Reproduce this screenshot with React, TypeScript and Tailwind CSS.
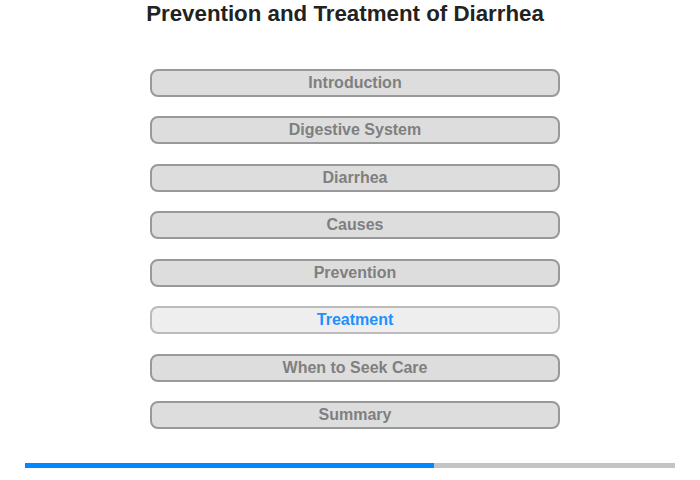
import React from 'react';

const items = [
  'Introduction',
  'Digestive System',
  'Diarrhea',
  'Causes',
  'Prevention',
  'Treatment',
  'When to Seek Care',
  'Summary',
];

const App = () => {
  const active = 'Treatment';
  return (
    <div className="w-[700px] h-[480px] bg-white font-['Liberation_Sans',Arial,sans-serif] flex flex-col">
      {/* Title */}
      <h1 className="h-[28px] pr-[10px] text-center text-[22.3px] leading-[28px] font-bold text-[#222]">
        Prevention and Treatment of Diarrhea
      </h1>

      {/* Menu */}
      <div className="mt-[40.75px] pl-[10px] flex flex-col items-center gap-[19.5px]">
        {items.map((item) =>
          item === active ? (
            <div
              key={item}
              className="w-[410px] h-[28px] rounded-[8px] border-2 border-[#bbbbbb] bg-[#eeeeee] flex items-center justify-center text-[16px] font-bold text-[#1e90ff]"
            >
              {item}
            </div>
          ) : (
            <div
              key={item}
              className="w-[410px] h-[28px] rounded-[8px] border-2 border-[#999999] bg-[#dddddd] flex items-center justify-center text-[16px] font-bold text-[#7f7f7f]"
            >
              {item}
            </div>
          )
        )}
      </div>

      {/* Progress */}
      <div className="mt-[33.25px] mx-[25px] h-[5px] flex">
        <div className="w-[409px] bg-[#0088ff]" />
        <div className="flex-1 bg-[#c4c4c4]" />
      </div>
    </div>
  );
};

export default App;
